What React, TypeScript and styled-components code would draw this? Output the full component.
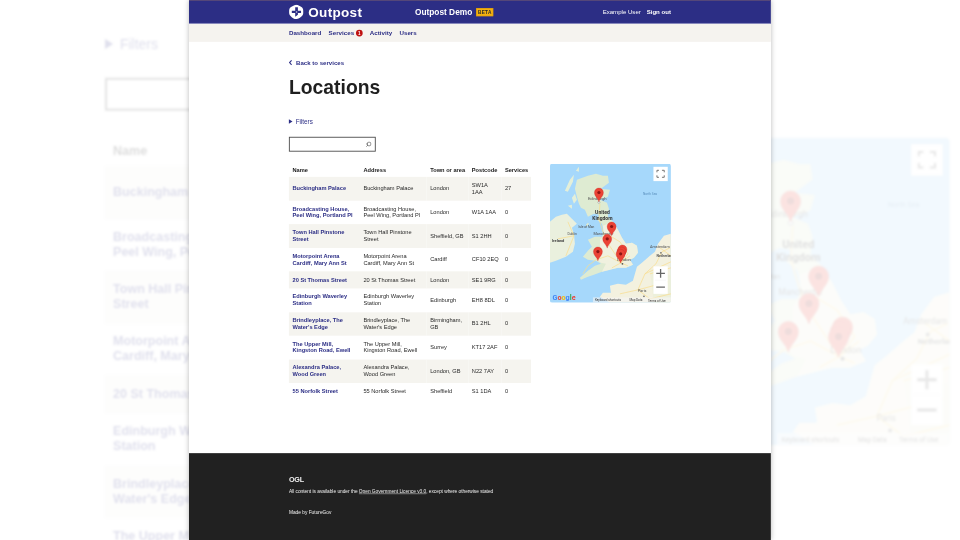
import React from "react";
import styled, { createGlobalStyle } from "styled-components";
import { Search } from "lucide-react";

const Global = createGlobalStyle`
  html, body { margin: 0; padding: 0; background: #fff; overflow: hidden; }
  body { font-family: "Liberation Sans", Arial, sans-serif; }
  #root { width: 960px; height: 540px; overflow: hidden; }
`;

const Stage = styled.div`
  position: relative;
  width: 960px;
  height: 540px;
  overflow: hidden;
  display: flex;
  justify-content: center;
  background: #fff;
`;
const Backdrop = styled.div`
  position: absolute;
  left: -117px;
  top: -226px;
  opacity: 0.14;
  filter: blur(1.1px);
  transform: scale(0.995);
  transform-origin: 237px 269px;
`;
const Slide = styled.div`
  position: relative;
  width: 582px;
  height: 540px;
  overflow: hidden;
  background: #fff;
  box-shadow: 0 0 5px rgba(0, 0, 0, 0.28);
`;
const Shrink = styled.div`
  transform: scale(0.45);
  transform-origin: 0 0;
  filter: blur(1.1px);
`;
const Page = styled.div`
  width: 1293px;
  background: #fff;
  color: #1f1f1f;
  font-size: 13px;
`;
const Inner = styled.div`
  padding: 0 222px;
`;
const Masthead = styled.header`
  height: 53px;
  box-sizing: border-box;
  background: #2c2e85;
  border-top: 2px solid #5a4b78;
  border-bottom: 2px solid #7c7db8;
`;
const MastRow = styled(Inner)`
  height: 49px;
  display: flex;
  align-items: center;
  color: #fff;
`;
const Brand = styled.div`
  width: 280px;
  display: flex;
  align-items: center;
  gap: 10px;
  font-size: 30px;
  font-weight: 700;
  letter-spacing: 0.7px;
`;
const Product = styled.div`
  display: flex;
  align-items: center;
  gap: 9px;
  font-size: 18.5px;
  font-weight: 700;
`;
const Beta = styled.span`
  background: #f4b00f;
  color: #2a2a2a;
  font-size: 10.5px;
  font-weight: 700;
  padding: 2px 3px;
  line-height: 12px;
  border: 1px solid #d99a05;
  letter-spacing: 0.5px;
`;
const UserBox = styled.div`
  margin-left: auto;
  display: flex;
  gap: 13px;
  font-size: 13.5px;
`;
const SignOut = styled.span`
  font-weight: 700;
`;
const NavBar = styled.nav`
  height: 40px;
  background: #f5f3ef;
`;
const NavRow = styled(Inner)`
  height: 40px;
  display: flex;
  align-items: center;
  gap: 16px;
`;
const NavLink = styled.span`
  display: flex;
  align-items: center;
  gap: 4px;
  font-size: 13.8px;
  font-weight: 700;
  color: #2c2e85;
`;
const Badge = styled.span`
  width: 15px;
  height: 15px;
  border-radius: 50%;
  background: #bf1111;
  color: #fff;
  font-size: 10px;
  line-height: 15px;
  text-align: center;
`;
const Main = styled(Inner)`
  height: 914px;
  box-sizing: border-box;
  padding-top: 37px;
`;
const Back = styled.div`
  display: flex;
  align-items: center;
  gap: 9px;
  height: 18px;
  font-size: 13.5px;
  font-weight: 700;
  color: #2c2e85;
`;
const Title = styled.h1`
  margin: 18px 0 0;
  font-size: 43px;
  line-height: 54px;
  font-weight: 700;
  color: #1f1f1f;
`;
const Filters = styled.div`
  margin-top: 41px;
  display: flex;
  align-items: center;
  gap: 7px;
  height: 18px;
  font-size: 14px;
  color: #2c2e85;
`;
const Triangle = styled.span`
  width: 0;
  height: 0;
  border-left: 8px solid #2c2e85;
  border-top: 5px solid transparent;
  border-bottom: 5px solid transparent;
`;
const SearchBox = styled.div`
  position: relative;
  margin-top: 25px;
  width: 193px;
  height: 33px;
`;
const SearchInput = styled.input`
  width: 100%;
  height: 100%;
  box-sizing: border-box;
  border: 2px solid #4c4c4c;
  background: #fff;
  padding: 0 8px;
`;
const SearchIcon = styled.span`
  position: absolute;
  right: 9px;
  top: 10px;
  display: flex;
  color: #444;
  transform: scaleX(-1);
`;
const Columns = styled.div`
  margin-top: 27px;
  display: flex;
  gap: 42px;
  align-items: flex-start;
`;
const Table = styled.table`
  width: 538px;
  table-layout: fixed;
  border-collapse: collapse;
  font-size: 12.6px;
  line-height: 15px;
`;
const Col = styled.col<{ $w: number }>`
  width: ${(p) => p.$w}px;
`;
const Th = styled.th`
  text-align: left;
  font-weight: 700;
  padding: 7px 0 7px 8px;
  color: #1a1a1a;
`;
const Tr = styled.tr`
  &:nth-child(odd) {
    background: #f5f4ef;
  }
`;
const Td = styled.td`
  padding: 11.3px 6px 11.3px 8px;
  color: #2a2a2a;
  vertical-align: middle;
`;
const NameTd = styled(Td)`
  font-weight: 700;
  color: #2c2e85;
`;
const MapFrame = styled.div`
  width: 269px;
  height: 309px;
  border-radius: 5px;
  overflow: hidden;
  flex: none;
`;
const MapSvg = styled.svg`
  display: block;
  width: 100%;
  height: 100%;
`;
const Footer = styled.footer`
  background: #212121;
  color: #f2f2f2;
  height: 330px;
  box-sizing: border-box;
  padding-top: 50px;
`;
const Ogl = styled.div`
  font-size: 16px;
  font-weight: 700;
  line-height: 20px;
  letter-spacing: -0.3px;
`;
const Licence = styled.div`
  margin-top: 7px;
  font-size: 10.6px;
  line-height: 16px;
`;
const LicenceLink = styled.span`
  text-decoration: underline;
`;
const Made = styled.div`
  margin-top: 31px;
  font-size: 10.7px;
  line-height: 16px;
`;

const rows = [
  ["Buckingham Palace", "Buckingham Palace", "London", "SW1A 1AA", "27"],
  ["Broadcasting House, Peel Wing, Portland Pl", "Broadcasting House, Peel Wing, Portland Pl", "London", "W1A 1AA", "0"],
  ["Town Hall Pinstone Street", "Town Hall Pinstone Street", "Sheffield, GB", "S1 2HH", "0"],
  ["Motorpoint Arena Cardiff, Mary Ann St", "Motorpoint Arena Cardiff, Mary Ann St", "Cardiff", "CF10 2EQ", "0"],
  ["20 St Thomas Street", "20 St Thomas Street", "London", "SE1 9RG", "0"],
  ["Edinburgh Waverley Station", "Edinburgh Waverley Station", "Edinburgh", "EH8 8DL", "0"],
  ["Brindleyplace, The Water's Edge", "Brindleyplace, The Water's Edge", "Birmingham, GB", "B1 2HL", "0"],
  ["The Upper Mill, Kingston Road, Ewell", "The Upper Mill, Kingston Road, Ewell", "Surrey", "KT17 2AF", "0"],
  ["Alexandra Palace, Wood Green", "Alexandra Palace, Wood Green", "London, GB", "N22 7AY", "0"],
  ["55 Norfolk Street", "55 Norfolk Street", "Sheffield", "S1 1DA", "0"],
];

const Logo = () => (
  <svg width="33" height="33" viewBox="0 0 33 33" aria-hidden="true">
    <path fill="#fff" d="M16.5 0.5c2 0 3.7.8 5.4 1.7l5 2.9c1.900 1.100 3.300 2.200 4.200 4.200.8 1.700.9 3.300.9 5.200v3.600c0 3-1 5.200-2.900 7.400-3 3.300-7.600 6.900-12.600 6.900-5.300 0-9.600-3.500-12.800-7C1.600 23.500.5 21.200.5 18v-3.500c0-2 .2-3.700 1-5.400.9-2 2.300-3.100 4.200-4.100l5.400-3c1.700-.9 3.400-1.500 5.400-1.500z" />
    <path fill="#2c2e85" d="M14 6h6v8h7v5h-7v3.500L14 27v-8H6.500v-5H14z" />
    <path fill="#fff" d="M15.500 15.500h3v2h-3z" />
  </svg>
);

const Pin = ({ x, y }: { x: number; y: number }) => (
  <g transform={`translate(${x} ${y})`}>
    <path
      fill="#ea4335"
      stroke="#c5221f"
      strokeWidth="0.25"
      d="M0 0C-.8-3.600-4.500-5.300-4.500-9.300a4.500 4.500 0 1 1 9 0C4.500-5.300.8-3.600 0 0Z"
    />
    <circle cx="0" cy="-9.300" r="1.600" fill="#8c1512" />
  </g>
);

const Label = styled.text<{ $bold?: boolean; $size?: number; $fill?: string }>`
  font-family: Roboto, "Liberation Sans", sans-serif;
  font-size: ${(p) => p.$size ?? 3.6}px;
  font-weight: ${(p) => (p.$bold ? 700 : 400)};
  fill: ${(p) => p.$fill ?? "#4f4f4f"};
`;

const UkMap = () => (
  <MapSvg viewBox="0 0 121 139" aria-hidden="true">
    <rect width="121" height="139" fill="#a6d8fb" />
    {/* Ireland */}
    <path fill="#eaf0de" d="M0 58L6 53 12 51 17 50 22 55 27 60 22 64 24 70 25 80 23 88 16 93 6 97 0 99Z" />
    {/* Outer Hebrides / islands */}
    <path fill="#e4efd9" d="M15 27L20 16 24 11 23 18 18 28Z M22 34L25 30 27 36 24 40Z M26 7L29 3 29 8Z M18 42L22 41 22 45Z" />
    {/* Great Britain */}
    <path
      fill="#deebd2"
      d="M38 12L46 10 53 12 58 12 59 19 51 25 60 26 58 33 50 36 57 39 59 45 58 53 63 58 68 66 72 74 76 80 82 79 87 82 88 89 84 94 80 96 83 101 76 104 68 104 60 106 52 108 44 111 38 113 31 116 30 114 38 107 45 102 51 100 46 97 38 96 33 93 38 87 42 83 38 76 45 73 52 73 54 68 52 60 47 56 50 51 44 50 38 53 35 46 31 44 29 40 27 33 25 25 27 16Z"
    />
    {/* England lowland tint */}
    <path fill="#f0f1df" d="M53 62L63 58 68 66 72 74 76 80 82 79 87 82 88 89 84 94 80 96 83 101 76 104 68 104 60 106 52 108 56 100 51 99 46 95 46 88 50 84 50 76 54 72Z" />
    {/* Isle of Man */}
    <path fill="#dfebd2" d="M36 61l2-2 1 1-2 3Z" />
    {/* Continent */}
    <path fill="#f3f1df" d="M121 70L114 72 108 80 105 88 100 92 92 99 87 103 85 110 83 117 76 121 68 120 60 122 61 129 53 129 50 133 60 139 121 139Z" />
    <path fill="#e9efd8" d="M121 112L100 105 104 139 121 139Z" opacity="0.7" />
    {/* Roads */}
    <g fill="none" stroke="#f9dd8c" strokeWidth="0.7" strokeLinejoin="round">
      <path d="M71 99L61 84 57 78 53 68 49 55 50 40" />
      <path d="M71 99L58 92 46 96 38 102 33 110" />
      <path d="M71 99L78 90 70 78 60 72" />
      <path d="M71 99L78 102M71 99L62 104M71 99L80 92" />
      <path d="M88 126L95 110 106 100 112 88 120 84" />
      <path d="M88 126L70 130M88 126L100 135 121 130M88 126L118 118M100 110L121 104" />
      <path d="M110 84L121 92M95 110L121 98" />
      <path d="M8 75L24 72M24 72L16 92M24 72L18 58" />
    </g>
    <Label x="93" y="31.500" $size={3.2} $fill="#5a8fbd">North Sea</Label>
    <Label x="38" y="36" $size={4.2}>Edinburgh</Label>
    <circle cx="49" cy="38.500" r="1" fill="#fff" stroke="#777" strokeWidth="0.4" />
    <Label x="52.500" y="50" $bold $size={5} $fill="#333" textAnchor="middle">United</Label>
    <Label x="52.500" y="56" $bold $size={5} $fill="#333" textAnchor="middle">Kingdom</Label>
    <Label x="28.500" y="64" $size={3.2} $fill="#444">Isle of Man</Label>
    <Label x="43.500" y="71" $size={3.8}>Manchester</Label>
    <Label x="17.500" y="71" $size={3.4}>Dublin</Label>
    <Label x="2" y="78.500" $bold $size={4} $fill="#444">Ireland</Label>
    <Label x="100" y="84.500" $size={3.8}>Amsterdam</Label>
    <circle cx="111" cy="89" r="0.9" fill="#777" />
    <Label x="106.500" y="93.500" $bold $size={3.6} $fill="#555">Netherlands</Label>
    <Label x="67" y="97.500" $size={4.200}>London</Label>
    <circle cx="72.500" cy="100" r="0.9" fill="#555" />
    <Label x="88" y="128" $size={3.8}>Paris</Label>
    <circle cx="94" cy="132.500" r="0.9" fill="#777" />
    <Pin x={49} y={38} />
    <Pin x={61.700} y={72} />
    <Pin x={57.300} y={84.300} />
    <Pin x={48} y={97} />
    <Pin x={72.500} y={95} />
    <Pin x={71.500} y={97} />
    <Pin x={70.700} y={99.300} />
    {/* Fullscreen control */}
    <rect x="103.500" y="3" width="14.300" height="14.300" fill="#fff" />
    <path fill="none" stroke="#666" strokeWidth="0.9" d="M107 8.500V6.500H109M112 6.500H114.300V8.500M114.300 11.500V13.500H112M109 13.500H107V11.500" />
    {/* Zoom control */}
    <rect x="103.500" y="102.500" width="14.300" height="27.500" fill="#fff" />
    <path stroke="#e6e6e6" strokeWidth="0.3" d="M105 116.300H116" />
    <path fill="none" stroke="#666" strokeWidth="1.300" d="M106.300 109.500H115M110.650 105.200V113.800M106.300 123.200H115" />
    {/* Attribution */}
    <rect x="43" y="133.500" width="78" height="5.500" fill="#f5f5f5" opacity="0.6" />
    <Label x="45" y="137.500" $size={3} $fill="#333">Keyboard shortcuts</Label>
    <Label x="79.500" y="137.500" $size={3} $fill="#333">Map Data</Label>
    <Label x="98" y="137.700" $size={3} $fill="#333">Terms of Use</Label>
    <Label x="2.700" y="136.500" $size={7.200} $bold $fill="#4285f4">
      G<tspan fill="#ea4335">o</tspan>
      <tspan fill="#fbbc05">o</tspan>
      <tspan fill="#4285f4">g</tspan>
      <tspan fill="#34a853">l</tspan>
      <tspan fill="#ea4335">e</tspan>
    </Label>
  </MapSvg>
);

const LocationsPage = () => (
  <Page>
    <Masthead>
      <MastRow>
        <Brand>
          <Logo />
          Outpost
        </Brand>
        <Product>
          Outpost Demo <Beta>BETA</Beta>
        </Product>
        <UserBox>
          <span>Example User</span>
          <SignOut>Sign out</SignOut>
        </UserBox>
      </MastRow>
    </Masthead>
    <NavBar>
      <NavRow>
        <NavLink>Dashboard</NavLink>
        <NavLink>
          Services <Badge>1</Badge>
        </NavLink>
        <NavLink>Activity</NavLink>
        <NavLink>Users</NavLink>
      </NavRow>
    </NavBar>
    <Main>
      <Back>
        <svg width="7" height="12" viewBox="0 0 7 12" aria-hidden="true">
          <path d="M6 1L1.500 6 6 11" fill="none" stroke="#2c2e85" strokeWidth="2.400" />
        </svg>
        Back to services
      </Back>
      <Title>Locations</Title>
      <Filters>
        <Triangle />
        Filters
      </Filters>
      <SearchBox>
        <SearchInput aria-label="Search" />
        <SearchIcon>
          <Search size={13} strokeWidth={2.4} />
        </SearchIcon>
      </SearchBox>
      <Columns>
        <Table>
          <colgroup>
            <Col $w={157.5} />
            <Col $w={148.5} />
            <Col $w={92.5} />
            <Col $w={73.5} />
            <Col $w={66} />
          </colgroup>
          <thead>
            <tr>
              <Th>Name</Th>
              <Th>Address</Th>
              <Th>Town or area</Th>
              <Th>Postcode</Th>
              <Th>Services</Th>
            </tr>
          </thead>
          <tbody>
            {rows.map((r) => (
              <Tr key={r[0]}>
                <NameTd>{r[0]}</NameTd>
                <Td>{r[1]}</Td>
                <Td>{r[2]}</Td>
                <Td>{r[3]}</Td>
                <Td>{r[4]}</Td>
              </Tr>
            ))}
          </tbody>
        </Table>
        <MapFrame>
          <UkMap />
        </MapFrame>
      </Columns>
    </Main>
    <Footer>
      <Inner>
        <Ogl>OGL</Ogl>
        <Licence>
          All content is available under the <LicenceLink>Open Government Licence v3.0</LicenceLink>, except where otherwise stated
        </Licence>
        <Made>Made by FutureGov</Made>
      </Inner>
    </Footer>
  </Page>
);

export default function App() {
  return (
    <Stage>
      <Global />
      <Backdrop aria-hidden="true">
        <LocationsPage />
      </Backdrop>
      <Slide>
        <Shrink>
          <LocationsPage />
        </Shrink>
      </Slide>
    </Stage>
  );
}
